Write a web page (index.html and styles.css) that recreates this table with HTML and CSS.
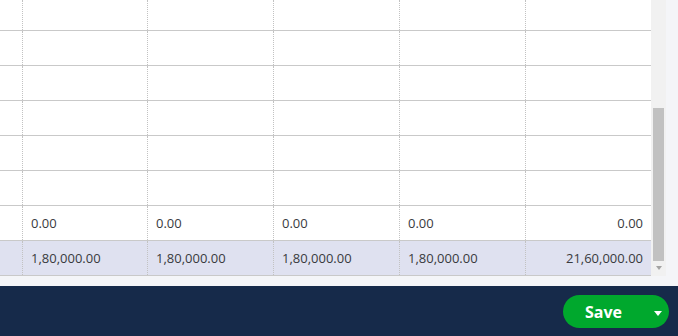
FILE: index.html
```
<!DOCTYPE html>
<html>
<head>
<meta charset="utf-8">
<link rel="stylesheet" href="styles.css">
</head>
<body>
<div class="page">
  <div class="main">
    <div class="table">
      <div class="row row-first"><div class="cell"></div><div class="cell"></div><div class="cell"></div><div class="cell"></div><div class="cell"></div><div class="cell"></div></div>
      <div class="row"><div class="cell"></div><div class="cell"></div><div class="cell"></div><div class="cell"></div><div class="cell"></div><div class="cell"></div></div>
      <div class="row"><div class="cell"></div><div class="cell"></div><div class="cell"></div><div class="cell"></div><div class="cell"></div><div class="cell"></div></div>
      <div class="row"><div class="cell"></div><div class="cell"></div><div class="cell"></div><div class="cell"></div><div class="cell"></div><div class="cell"></div></div>
      <div class="row"><div class="cell"></div><div class="cell"></div><div class="cell"></div><div class="cell"></div><div class="cell"></div><div class="cell"></div></div>
      <div class="row"><div class="cell"></div><div class="cell"></div><div class="cell"></div><div class="cell"></div><div class="cell"></div><div class="cell"></div></div>
      <div class="row"><div class="cell"></div><div class="cell">0.00</div><div class="cell">0.00</div><div class="cell">0.00</div><div class="cell">0.00</div><div class="cell right">0.00</div></div>
      <div class="row row-total"><div class="cell"></div><div class="cell">1,80,000.00</div><div class="cell">1,80,000.00</div><div class="cell">1,80,000.00</div><div class="cell">1,80,000.00</div><div class="cell right">21,60,000.00</div></div>
    </div>
    <div class="scrollbar">
      <div class="thumb"></div>
      <div class="arrow"></div>
    </div>
  </div>
  <div class="spacer"></div>
  <div class="footer">
    <button class="save"><span class="save-label">Save</span><span class="caret"></span></button>
  </div>
</div>
</body>
</html>
```
FILE: styles.css
```
html, body {
  margin: 0;
  padding: 0;
}
body {
  background: #f4f5f8;
  font-family: "Open Sans", "Liberation Sans", sans-serif;
}
.page {
  width: 678px;
  height: 336px;
  display: flex;
  flex-direction: column;
  overflow: hidden;
}
.main {
  display: flex;
  height: 276px;
}
.table {
  width: 651px;
  background: #fff;
  display: flex;
  flex-direction: column;
}
.row {
  display: grid;
  grid-template-columns: 22px 125px 126px 126px 126px 126px;
  height: 35px;
  box-sizing: border-box;
  border-bottom: 1px solid #c9c9c9;
}
.row-first {
  height: 31px;
}
.row-total {
  background: #dfe1f0;
}
.cell {
  box-sizing: border-box;
  border-left: 1px dotted #c2c2c2;
  font-size: 13px;
  color: #393a3d;
  display: flex;
  align-items: center;
  padding: 0 8px;
}
.cell:first-child {
  border-left: none;
}
.cell.right {
  justify-content: flex-end;
}
.scrollbar {
  width: 15px;
  background: #f1f1f1;
  display: flex;
  flex-direction: column;
  align-items: center;
  padding-top: 108px;
  box-sizing: border-box;
}
.thumb {
  width: 11px;
  height: 153px;
  background: #c1c1c1;
}
.arrow {
  margin-top: 5px;
  width: 0;
  height: 0;
  border-left: 3.5px solid transparent;
  border-right: 3.5px solid transparent;
  border-top: 4px solid #a3a3a3;
}
.spacer {
  height: 10px;
}
.footer {
  height: 50px;
  background: #162a4a;
  display: flex;
  align-items: center;
  justify-content: flex-end;
  padding-right: 9px;
}
.save {
  height: 33px;
  width: 106px;
  border: none;
  border-radius: 17px;
  background: #00a82d;
  color: #fff;
  display: flex;
  align-items: center;
  padding: 0 7px 0 22px;
  box-sizing: border-box;
  margin-top: 1px;
  font-family: "Open Sans", "Liberation Sans", sans-serif;
}
.save-label {
  font-size: 16px;
  font-weight: 700;
  flex: 1;
  text-align: left;
}
.caret {
  width: 0;
  height: 0;
  border-left: 4.5px solid transparent;
  border-right: 4.5px solid transparent;
  border-top: 5px solid #fff;
  margin-top: 3px;
}
```
